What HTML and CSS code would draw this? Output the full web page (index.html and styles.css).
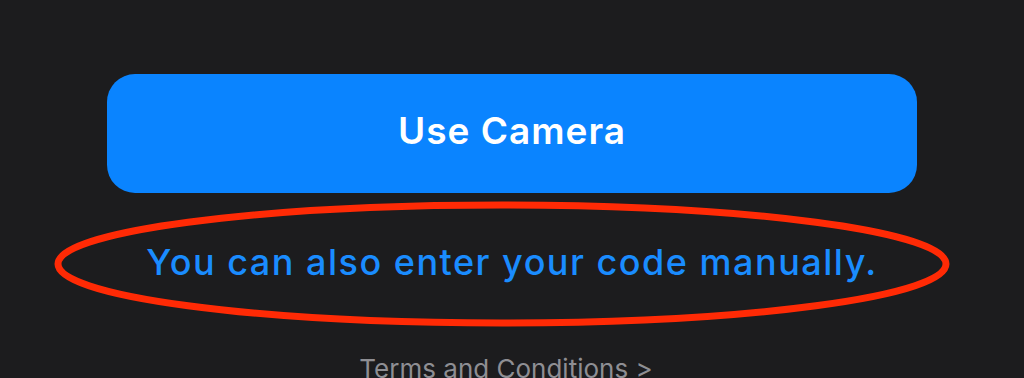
FILE: index.html
```html
<!DOCTYPE html>
<html lang="en">
<head>
<meta charset="utf-8">
<title>Scan Code</title>
<link rel="stylesheet" href="styles.css">
</head>
<body>
<main class="screen">
  <button class="camera-btn" type="button">Use Camera</button>
  <div class="manual-wrap">
    <a class="manual-link" href="#">You can also enter your code manually.</a>
    <svg class="annotation" width="905" height="130" viewBox="0 0 905 130" aria-hidden="true">
      <ellipse cx="452.5" cy="65" rx="444" ry="59" fill="none" stroke="#ff2a05" stroke-width="7"/>
    </svg>
  </div>
  <a class="terms" href="#">Terms and Conditions <span class="chev">&gt;</span></a>
</main>
</body>
</html>
```
FILE: styles.css
```css
html, body {
  margin: 0;
  padding: 0;
  background: #1c1c1e;
  height: 100%;
  overflow: hidden;
}

.screen {
  display: flex;
  flex-direction: column;
  align-items: center;
  font-family: Inter, "Noto Sans", "Liberation Sans", sans-serif;
}

.camera-btn {
  margin-top: 74px;
  width: 810px;
  height: 119px;
  border: none;
  border-radius: 28px;
  background: #0a84ff;
  color: #ffffff;
  font-family: inherit;
  font-size: 37px;
  font-weight: 600;
  line-height: 44px;
  padding: 0 0 6px 0;
  letter-spacing: 1px;
}

.manual-wrap {
  position: relative;
  margin-top: 48px;
}

.manual-link {
  display: block;
  color: #1a8cff;
  font-size: 36px;
  font-weight: 500;
  line-height: 42px;
  letter-spacing: 1.5px;
  text-decoration: none;
}

.annotation {
  position: absolute;
  left: 50%;
  top: 50%;
  transform: translate(-50%, -50%);
  margin-top: 2px;
  margin-left: -10px;
  pointer-events: none;
}

.terms {
  margin-top: 70px;
  margin-right: 12px;
  color: #8e8e93;
  font-size: 26px;
  line-height: 32px;
  text-decoration: none;
}
```
